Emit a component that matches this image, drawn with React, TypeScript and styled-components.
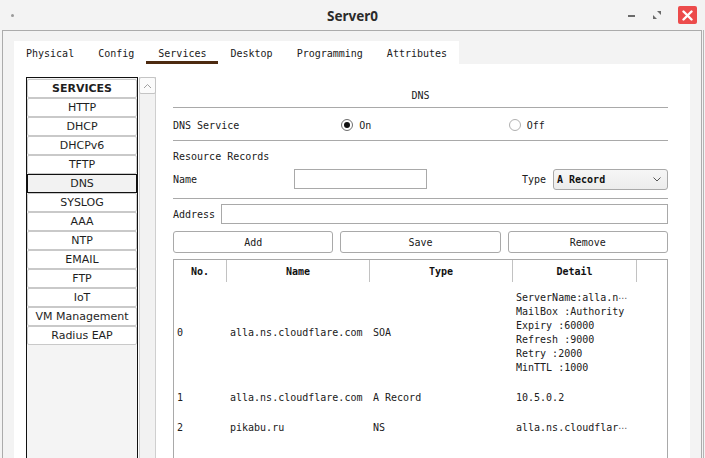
import React from "react";
import styled, { createGlobalStyle } from "styled-components";

const mono = `"DejaVu Sans Mono", "Liberation Mono", monospace`;
const sans = `"DejaVu Sans", Verdana, sans-serif`;

const Global = createGlobalStyle`
  html, body { margin: 0; padding: 0; background: #f3f3f3; overflow: hidden; }
  * { box-sizing: border-box; }
`;

const Window = styled.div`
  width: 705px;
  height: 458px;
  overflow: hidden;
  display: flex;
  flex-direction: column;
  background: #f3f3f3;
`;

const TitleBar = styled.div`
  height: 30px;
  flex: none;
  display: grid;
  grid-template-columns: 1fr auto 1fr;
  align-items: center;
`;

const TitleDot = styled.span`
  width: 3px;
  height: 3px;
  border-radius: 50%;
  background: #9a9a9a;
  margin-left: 11px;
`;

const Title = styled.div`
  font-family: "Noto Sans", "Open Sans", sans-serif;
  font-weight: 700;
  font-size: 13.5px;
  color: #2b2b2b;
  padding-top: 1px;
`;

const Controls = styled.div`
  display: flex;
  justify-content: flex-end;
  align-items: center;
  padding-right: 8px;
`;

const Minimize = styled.span`
  width: 7px;
  height: 2px;
  background: #6a6a6a;
  margin-right: 17px;
  margin-top: 2px;
`;

const RestoreIcon = styled.svg`
  width: 10px;
  height: 10px;
  margin-right: 16px;
`;

const CloseBtn = styled.div`
  width: 19px;
  height: 18px;
  border-radius: 2px;
  background: #ec4b4b;
  display: flex;
  align-items: center;
  justify-content: center;
`;

const Frame = styled.div`
  flex: 1;
  margin-left: 2px;
  width: 700px;
  border: 1px solid #ababab;
  border-bottom: none;
  box-shadow: 1px 0 0 #f3f3f3, 2px 0 0 #b5b5b5;
  padding: 10px 0 0 11px;
  display: flex;
  flex-direction: column;
`;

const TabStrip = styled.div`
  display: flex;
  align-self: flex-start;
  background: #fff;
  height: 23px;
`;

const Tab = styled.div<{ $active?: boolean }>`
  padding: 1px 12px 0;
  display: flex;
  align-items: center;
  font-family: ${mono};
  font-size: 10px;
  color: #202020;
  box-shadow: ${(p) => (p.$active ? "inset 0 -3px 0 #4d2a10" : "none")};
`;

const Panel = styled.div`
  flex: 1;
  width: 676px;
  background: #fff;
  display: flex;
  padding: 13px 0 0 12px;
`;

const Sidebar = styled.div`
  display: flex;
  gap: 1px;
  height: 400px;
`;

const ListBox = styled.div`
  width: 112px;
  border: 1px solid #111;
  background: #f4f4f4;
  display: flex;
  flex-direction: column;
  padding-top: 1px;
`;

const ListItem = styled.div<{ $selected?: boolean; $header?: boolean }>`
  height: 19px;
  flex: none;
  display: flex;
  align-items: center;
  justify-content: center;
  font-family: ${sans};
  font-size: 11px;
  font-weight: ${(p) => (p.$header ? 700 : 400)};
  color: #1e1e1e;
  background: ${(p) => (p.$selected ? "#f2f2f2" : "#fff")};
  border: 1px solid ${(p) => (p.$selected ? "#111" : "#c9c9c9")};
  border-radius: ${(p) => (p.$selected ? "0" : "2px")};
`;

const ScrollBar = styled.div`
  width: 17px;
  background: #f2f2f2;
  border-left: 1px solid #cfcfcf;
  border-right: 1px solid #cfcfcf;
  display: flex;
  flex-direction: column;
`;

const ScrollUp = styled.div`
  height: 17px;
  margin: 0 -1px;
  background: #fbfbfb;
  border: 1px solid #c4c4c4;
  border-radius: 2px;
  display: flex;
  align-items: center;
  justify-content: center;
`;

const Main = styled.div`
  width: 495px;
  margin-left: 17px;
  display: flex;
  flex-direction: column;
  font-family: ${mono};
  font-size: 10px;
  color: #202020;
`;

const SectionTitle = styled.div`
  height: 30px;
  display: flex;
  align-items: flex-end;
  justify-content: center;
  line-height: 14px;
  padding-bottom: 4px;
`;

const Divider = styled.div`
  height: 1px;
  background: #a9a9a9;
  flex: none;
`;

const ThreeCols = styled.div`
  display: grid;
  grid-template-columns: repeat(3, 1fr);
  column-gap: 7px;
`;

const ServiceRow = styled(ThreeCols)`
  height: 32px;
  align-items: center;
  padding-top: 2px;
`;

const RadioLabel = styled.label`
  display: flex;
  align-items: center;
  gap: 6px;
  padding-left: 1px;
`;

const RadioCircle = styled.span<{ $checked?: boolean }>`
  width: 12px;
  height: 12px;
  border-radius: 50%;
  border: 1px solid ${(p) => (p.$checked ? "#6e6e6e" : "#b0b0b0")};
  background: #fff;
  display: flex;
  align-items: center;
  justify-content: center;
  &::after {
    content: "";
    width: 6px;
    height: 6px;
    border-radius: 50%;
    background: ${(p) => (p.$checked ? "#111" : "transparent")};
  }
`;

const SubTitle = styled.div`
  line-height: 14px;
  padding: 9px 0 5px;
`;

const NameRow = styled.div`
  height: 20px;
  display: flex;
  align-items: center;
  margin-bottom: 9px;
`;

const FieldLabel = styled.span<{ $w?: number }>`
  width: ${(p) => (p.$w ? `${p.$w}px` : "auto")};
  flex: none;
`;

const Input = styled.div<{ $w?: number }>`
  height: 20px;
  width: ${(p) => (p.$w ? `${p.$w}px` : "auto")};
  flex: ${(p) => (p.$w ? "none" : "1")};
  border: 1px solid #a9a9a9;
  background: #fff;
`;

const Spacer = styled.div`
  flex: 1;
`;

const Select = styled.div`
  width: 115px;
  height: 21px;
  margin-left: 7px;
  border: 1px solid #a9a9a9;
  border-radius: 3px;
  background: linear-gradient(#f6f6f6, #ececec);
  display: flex;
  align-items: center;
  justify-content: space-between;
  padding: 0 6px 0 3px;
  font-weight: 700;
  color: #111;
`;

const AddressRow = styled.div`
  margin-top: 5px;
  height: 20px;
  display: flex;
  align-items: center;
  gap: 6px;
`;

const ButtonRow = styled(ThreeCols)`
  margin-top: 7px;
`;

const Button = styled.div`
  height: 22px;
  border: 1px solid #a9a9a9;
  border-radius: 3px;
  background: #fff;
  display: flex;
  align-items: center;
  justify-content: center;
`;

const Table = styled.div`
  margin-top: 6px;
  border: 1px solid #a9a9a9;
  border-bottom: none;
  height: 260px;
`;

const Cols = styled.div`
  display: grid;
  grid-template-columns: 53px 143px 143px 124px 1fr;
`;

const HeadCell = styled.div<{ $last?: boolean }>`
  height: 22px;
  display: flex;
  align-items: center;
  justify-content: center;
  font-weight: 700;
  color: #111;
  border-right: ${(p) => (p.$last ? "none" : "1px solid #c2c2c2")};
  padding-top: 1px;
`;

const DataRow = styled(Cols)<{ $h: number }>`
  height: ${(p) => p.$h}px;
  align-items: center;
  padding-top: 1px;
`;

const Cell = styled.div`
  padding-left: 3px;
  white-space: pre;
  overflow: hidden;
  line-height: 14px;
`;

const DetailLines = styled(Cell)`
  display: flex;
  flex-direction: column;
`;

const Ellipsis = styled.span`
  font-family: "DejaVu Sans", sans-serif;
  font-size: 9px;
  color: #555;
`;

const services = [
  "HTTP",
  "DHCP",
  "DHCPv6",
  "TFTP",
  "DNS",
  "SYSLOG",
  "AAA",
  "NTP",
  "EMAIL",
  "FTP",
  "IoT",
  "VM Management",
  "Radius EAP",
];

const tabs = ["Physical", "Config", "Services", "Desktop", "Programming", "Attributes"];

type Line = { text: string; cut?: boolean };

const records: { no: string; name: string; type: string; detail: Line[]; h: number }[] = [
  {
    no: "0",
    name: "alla.ns.cloudflare.com",
    type: "SOA",
    detail: [
      { text: "ServerName:alla.n", cut: true },
      { text: "MailBox :Authority" },
      { text: "Expiry :60000" },
      { text: "Refresh :9000" },
      { text: "Retry :2000" },
      { text: "MinTTL :1000" },
    ],
    h: 100,
  },
  { no: "1", name: "alla.ns.cloudflare.com", type: "A Record", detail: [{ text: "10.5.0.2" }], h: 30 },
  { no: "2", name: "pikabu.ru", type: "NS", detail: [{ text: "alla.ns.cloudflar", cut: true }], h: 31 },
];

export default function App() {
  return (
    <>
      <Global />
      <Window>
        <TitleBar>
          <TitleDot />
          <Title>Server0</Title>
          <Controls>
            <Minimize />
            <RestoreIcon viewBox="0 0 10 10">
              <polygon points="5,1 9,1 9,5" fill="#6a6a6a" />
              <polygon points="1,5 1,9 5,9" fill="#6a6a6a" />
            </RestoreIcon>
            <CloseBtn>
              <svg width="11" height="11" viewBox="0 0 11 11">
                <path d="M1.5 1.5 L9.5 9.5 M9.5 1.5 L1.5 9.5" stroke="#fff" strokeWidth="2.4" strokeLinecap="round" />
              </svg>
            </CloseBtn>
          </Controls>
        </TitleBar>
        <Frame>
          <TabStrip>
            {tabs.map((t) => (
              <Tab key={t} $active={t === "Services"}>
                {t}
              </Tab>
            ))}
          </TabStrip>
          <Panel>
            <Sidebar>
              <ListBox>
                <ListItem $header>SERVICES</ListItem>
                {services.map((s) => (
                  <ListItem key={s} $selected={s === "DNS"}>
                    {s}
                  </ListItem>
                ))}
              </ListBox>
              <ScrollBar>
                <ScrollUp>
                  <svg width="9" height="6" viewBox="0 0 9 6">
                    <polyline points="1,5 4.5,1.5 8,5" fill="none" stroke="#a0a0a0" strokeWidth="1" />
                  </svg>
                </ScrollUp>
              </ScrollBar>
            </Sidebar>
            <Main>
              <SectionTitle>DNS</SectionTitle>
              <Divider />
              <ServiceRow>
                <span>DNS Service</span>
                <RadioLabel>
                  <RadioCircle $checked />
                  On
                </RadioLabel>
                <RadioLabel>
                  <RadioCircle />
                  Off
                </RadioLabel>
              </ServiceRow>
              <Divider />
              <SubTitle>Resource Records</SubTitle>
              <NameRow>
                <FieldLabel $w={121}>Name</FieldLabel>
                <Input $w={133} />
                <Spacer />
                <FieldLabel>Type</FieldLabel>
                <Select>
                  <span>A Record</span>
                  <svg width="8" height="5" viewBox="0 0 8 5">
                    <polyline points="0.5,0.5 4,4 7.5,0.5" fill="none" stroke="#555" strokeWidth="1" />
                  </svg>
                </Select>
              </NameRow>
              <Divider />
              <AddressRow>
                <FieldLabel>Address</FieldLabel>
                <Input />
              </AddressRow>
              <ButtonRow>
                <Button>Add</Button>
                <Button>Save</Button>
                <Button>Remove</Button>
              </ButtonRow>
              <Table>
                <Cols>
                  <HeadCell>No.</HeadCell>
                  <HeadCell>Name</HeadCell>
                  <HeadCell>Type</HeadCell>
                  <HeadCell>Detail</HeadCell>
                  <HeadCell $last />
                </Cols>
                {records.map((r) => (
                  <DataRow key={r.no} $h={r.h}>
                    <Cell>{r.no}</Cell>
                    <Cell>{r.name}</Cell>
                    <Cell>{r.type}</Cell>
                    <DetailLines>
                      {r.detail.map((d) => (
                        <span key={d.text}>
                          {d.text}
                          {d.cut && <Ellipsis>{"\u22ef"}</Ellipsis>}
                        </span>
                      ))}
                    </DetailLines>
                    <Cell />
                  </DataRow>
                ))}
              </Table>
            </Main>
          </Panel>
        </Frame>
      </Window>
    </>
  );
}
